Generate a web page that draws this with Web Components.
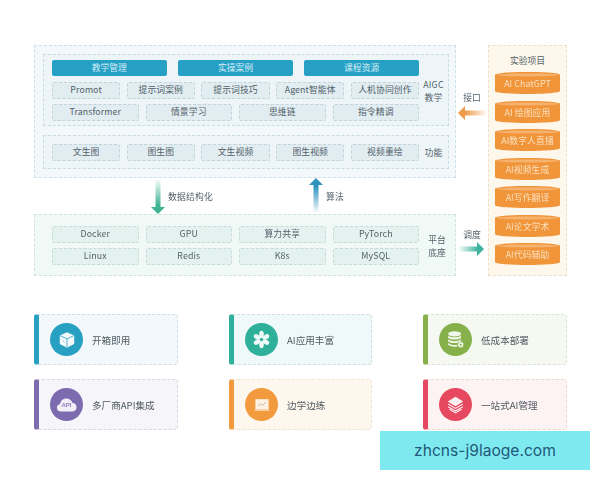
<!DOCTYPE html>
<html lang="zh">
<head>
<meta charset="utf-8">
<style>
html,body{margin:0;padding:0;background:#fff}
body{width:600px;height:480px;overflow:hidden;position:relative;font-family:"Noto Sans CJK SC","Noto Sans",sans-serif;color:#5d6b74}
</style>
</head>
<body>
<arch-page></arch-page>
<script>
const def=(name,html,extra)=>{customElements.define(name,class extends HTMLElement{
  constructor(){super();const r=this.attachShadow({mode:"open"});
    r.innerHTML=typeof html==="function"?html(this):html;}
  connectedCallback(){if(extra)extra(this)}
})};

/* dashed cell */
def("x-cell",`<style>:host{display:flex;align-items:center;justify-content:center;box-sizing:border-box;height:var(--h,17px);
  border:1px dashed var(--cb,#c3d3dc);border-radius:2px;background:var(--cg,#e2edf2);font-size:8.8px;line-height:1;color:#515f68;letter-spacing:.1px;white-space:nowrap}</style><slot></slot>`);

/* solid heading bar */
def("x-bar",`<style>:host{display:flex;align-items:center;justify-content:center;height:16px;border-radius:2px;background:#27a0c6;color:#d4edf5;font-size:8.8px;line-height:1;white-space:nowrap}</style><slot></slot>`);

/* dashed panel with a side label */
def("x-panel",`<style>
:host{display:flex;box-sizing:border-box;border:1px dashed var(--pb,#c9dbe3);background:var(--pg,#edf5f9)}
.c{flex:0 0 367px;display:flex;flex-direction:column}
.l{flex:1;display:flex;align-items:center;justify-content:center;text-align:center;font-size:8.8px;line-height:13px;color:#515f68;letter-spacing:.2px}
</style><div class="c" part="c"><slot></slot></div><div class="l"><slot name="label"></slot></div>`);

def("x-row",`<style>:host{display:grid;grid-auto-flow:column;grid-auto-columns:1fr;column-gap:var(--gap,7px);margin-bottom:var(--mb,5px)}
:host(:last-child){margin-bottom:0}</style><slot></slot>`);

/* database cylinder */
def("x-cyl",`<style>
:host{display:block;position:relative;box-sizing:border-box;height:22px;margin-bottom:6.5px}
svg{position:absolute;inset:0;width:100%;height:100%;display:block}
span{position:absolute;inset:3px 0 0 0;display:flex;align-items:center;justify-content:center;color:#fbe0bd;font-size:8.8px;line-height:1;white-space:nowrap;letter-spacing:.1px}
</style>
<svg viewBox="0 0 65 22.5" preserveAspectRatio="none">
<path d="M0 3C0 1.2 14 0 32.5 0S65 1.2 65 3V19.5C65 21.3 51 22.5 32.5 22.5S0 21.3 0 19.5Z" fill="#f1953a"/>
<ellipse cx="32.5" cy="3" rx="31" ry="1.5" fill="#f6b26f"/>
</svg><span><slot></slot></span>`);

/* gradient arrow */
def("x-arrow",t=>{
  const d=t.getAttribute("dir"),c=t.getAttribute("color");
  const id="g"+d;
  const shapes={
    down:{w:14,h:34,grad:'x1="0" y1="0" x2="0" y2="1"',p:"M4.5 0H9.5V27H14L7 34L0 27H4.5Z"},
    up:{w:14,h:34,grad:'x1="0" y1="1" x2="0" y2="0"',p:"M4.5 34H9.5V7H14L7 0L0 7H4.5Z"},
    left:{w:28,h:14,grad:'x1="1" y1="0" x2="0" y2="0"',p:"M28 4.5V9.5H7V14L0 7L7 0V4.5Z"},
    right:{w:25,h:14,grad:'x1="0" y1="0" x2="1" y2="0"',p:"M0 4.5V9.5H18V14L25 7L18 0V4.5Z"}
  }[d];
  return `<style>:host{display:block;line-height:0}</style>
  <svg width="${shapes.w}" height="${shapes.h}" viewBox="0 0 ${shapes.w} ${shapes.h}">
  <defs><linearGradient id="${id}" ${shapes.grad}><stop offset="0" stop-color="${c}" stop-opacity=".05"/><stop offset=".75" stop-color="${c}"/><stop offset="1" stop-color="${c}"/></linearGradient></defs>
  <path d="${shapes.p}" fill="url(#${id})"/></svg>`;
});

/* feature card */
def("x-card",`<style>
:host{display:flex;align-items:center;box-sizing:border-box;height:51px;border:1px dashed var(--b);border-left:5px solid var(--a);border-radius:3px;background:var(--bg);font-size:9.6px;color:#4f5a62;white-space:nowrap}
.i{flex:0 0 33px;width:33px;height:33px;border-radius:50%;background:var(--a);margin:0 9px 0 11px;display:flex;align-items:center;justify-content:center}
</style><div class="i"><slot name="icon"></slot></div><slot></slot>`);

const icons={
box:`<svg width="18" height="18" viewBox="0 0 20 20"><path d="M10 1.5 18 5V14.5L10 18.5 2 14.5V5Z" fill="#f3fafc"/><path d="M2.5 5.2 10 8.8 17.5 5.2M10 8.8V18" fill="none" stroke="#27a0c6" stroke-width=".9"/><path d="M5 11l2.5 1.2" stroke="#9ccfe0" stroke-width=".9"/></svg>`,
flower:`<svg width="19" height="19" viewBox="0 0 24 24" fill="#eefaf7"><ellipse cx="12" cy="5.6" rx="2.9" ry="4.6"/><ellipse cx="12" cy="18.4" rx="2.9" ry="4.6"/><ellipse cx="6.5" cy="8.8" rx="2.9" ry="4.6" transform="rotate(-60 6.5 8.8)"/><ellipse cx="17.5" cy="8.8" rx="2.9" ry="4.6" transform="rotate(60 17.5 8.8)"/><ellipse cx="6.5" cy="15.2" rx="2.9" ry="4.6" transform="rotate(60 6.5 15.2)"/><ellipse cx="17.5" cy="15.2" rx="2.9" ry="4.6" transform="rotate(-60 17.5 15.2)"/></svg>`,
db:`<svg width="19" height="19" viewBox="0 0 22 22"><g fill="#f1f7ea"><ellipse cx="10" cy="4.5" rx="7.5" ry="3"/><path d="M2.5 6.3C4 9 16 9 17.5 6.3V9C16 11.8 4 11.8 2.5 9Z"/><path d="M2.5 10.8C4 13.6 16 13.6 17.5 10.8V13C16 15.8 4 15.8 2.5 13Z"/><path d="M2.5 14.8C4 17.6 12 17.8 13 17V19C9 19.8 4 19 2.5 17.2Z"/></g><circle cx="17" cy="17" r="3.6" fill="#f1f7ea" stroke="#85b04a" stroke-width=".8"/><circle cx="17" cy="17" r="1.2" fill="#85b04a"/></svg>`,
api:`<svg width="21" height="16" viewBox="0 0 24 18"><path d="M6 16.5C2.8 16.5 1 14.4 1 12 1 9.8 2.6 8 4.8 7.8 5.2 4 8.2 1.5 11.8 1.5c3.4 0 6 2 6.9 5 2.8.2 4.8 2.4 4.8 5 0 2.8-2 5-5 5Z" fill="#f2eff7"/></svg><span class="t">API</span>`,
chart:`<svg width="16" height="14" viewBox="0 0 20 18"><path d="M1.5 1.5H18.5V14.5H1.5Z" fill="#fdf3e5"/><path d="M0.5 14.8H19.5V16.2H0.5Z" fill="#fdf3e5"/><path d="M5 10 8 7.5 10.5 9.5 15 5.5" fill="none" stroke="#b9a48a" stroke-width="1"/></svg>`,
layers:`<svg width="19" height="19" viewBox="0 0 22 22"><path d="M11 2 20 7.5 11 13 2 7.5Z" fill="#fdeef0"/><g fill="none" stroke="#fdeef0" stroke-width="1.3"><path d="M2.5 10.5 11 15.5 19.5 10.5"/><path d="M2.5 13.5 11 18.5 19.5 13.5"/><path d="M4 16.5 11 20.7 18 16.5"/></g></svg>`
};
def("x-icon",t=>`<style>:host{display:flex;position:relative;align-items:center;justify-content:center}
.t{position:absolute;left:0;right:0;top:50%;margin-top:-2.5px;text-align:center;font:700 6px/1 "Liberation Sans",sans-serif;color:#8d7dbb}</style>${icons[t.getAttribute("name")]}`);

def("x-watermark",`<style>:host{position:absolute;left:380px;top:431px;width:210px;height:39px;background:#7eeaef;display:flex;align-items:center;justify-content:center;
  font:15.6px/1 Inter,"Liberation Sans",sans-serif;color:#22587a}</style><slot></slot>`);

/* page */
def("arch-page",`<style>
:host{display:block;padding:45px 23px 0 34px;font-family:"Noto Sans CJK SC","Noto Sans",sans-serif}
.soft{filter:blur(.3px)}
.top{display:flex}
.left{flex:0 0 422px;display:flex;flex-direction:column}
.outer{box-sizing:border-box;height:133px;padding:8px 6px 8px 8px;border:1px dashed #cfe0e8;background:#f3f8fb;display:flex;flex-direction:column;gap:9px}
x-panel.a{height:72px;padding:5px 0 4px 8px}
x-panel.f{height:34px;padding:8px 0 0 8px}
.f span{display:block;margin-top:-8px}
.links{height:36px;display:flex}
.link{display:flex;align-items:center;font-size:8.8px;color:#515f68;letter-spacing:.2px}
.l1{margin-left:117px}.l1 span{margin-left:3px}
.l2{margin-left:96px}.l2 span{margin-left:3px}
.l1 x-arrow{margin-top:1px}.l2 x-arrow{margin-top:-2px}
.base{box-sizing:border-box;height:62px;padding:11px 6px 0 17px;border:1px dashed #cfe3df;background:#f1f9f7;display:flex;--cb:#c5dcd8;--cg:#e4f2ef}
.base .g{flex:0 0 367px}
.base .lb{flex:1;text-align:center;align-self:center;font-size:8.8px;line-height:13px;margin-top:-10px;padding-left:6px;color:#515f68}
.mid{flex:0 0 32px;display:flex;flex-direction:column;font-size:8.8px;color:#515f68;align-items:center}
.m1{margin-top:46px;display:flex;flex-direction:column;align-items:center;gap:2px}
.m2{margin-top:108px;display:flex;flex-direction:column;align-items:center;gap:1px}
.m2 x-arrow{margin-left:-1px}
.right{flex:0 0 79px;box-sizing:border-box;height:231px;border:1px dashed #ecdfcb;background:#fdf7ec;padding:9px 6px 0 6px}
.rt{font-size:8.8px;line-height:12px;text-align:center;color:#515f68;margin-bottom:5px}
.cards{display:grid;grid-template-columns:144px 143px 144px;column-gap:51px;row-gap:14px;margin-top:38px}
</style>
<div class="top soft">
  <div class="left">
    <div class="outer">
      <x-panel class="a">
        <x-row style="--gap:11.5px;--mb:6px"><x-bar>教学管理</x-bar><x-bar>实操案例</x-bar><x-bar>课程资源</x-bar></x-row>
        <x-row style="--gap:6.5px;--mb:5px;--h:17px"><x-cell>Promot</x-cell><x-cell>提示词案例</x-cell><x-cell>提示词技巧</x-cell><x-cell>Agent智能体</x-cell><x-cell>人机协同创作</x-cell></x-row>
        <x-row style="--gap:7px"><x-cell>Transformer</x-cell><x-cell>情景学习</x-cell><x-cell>思维链</x-cell><x-cell>指令精调</x-cell></x-row>
        <span slot="label">AIGC<br>教学</span>
      </x-panel>
      <x-panel class="f">
        <x-row style="--gap:6.5px"><x-cell>文生图</x-cell><x-cell>图生图</x-cell><x-cell>文生视频</x-cell><x-cell>图生视频</x-cell><x-cell>视频重绘</x-cell></x-row>
        <span slot="label">功能</span>
      </x-panel>
    </div>
    <div class="links">
      <div class="link l1"><x-arrow dir="down" color="#3fb394"></x-arrow><span>数据结构化</span></div>
      <div class="link l2"><x-arrow dir="up" color="#2f93bf"></x-arrow><span>算法</span></div>
    </div>
    <div class="base">
      <div class="g">
        <x-row style="--gap:7px;--mb:5px"><x-cell>Docker</x-cell><x-cell>GPU</x-cell><x-cell>算力共享</x-cell><x-cell>PyTorch</x-cell></x-row>
        <x-row style="--gap:7px"><x-cell>Linux</x-cell><x-cell>Redis</x-cell><x-cell>K8s</x-cell><x-cell>MySQL</x-cell></x-row>
      </div>
      <div class="lb">平台<br>底座</div>
    </div>
  </div>
  <div class="mid">
    <div class="m1"><span>接口</span><x-arrow dir="left" color="#ee9a48"></x-arrow></div>
    <div class="m2"><span>调度</span><x-arrow dir="right" color="#3fb3a0"></x-arrow></div>
  </div>
  <div class="right">
    <div class="rt">实验项目</div>
    <x-cyl>AI ChatGPT</x-cyl><x-cyl>AI 绘图应用</x-cyl><x-cyl>AI数字人直播</x-cyl><x-cyl>AI视频生成</x-cyl><x-cyl>AI写作翻译</x-cyl><x-cyl>AI论文学术</x-cyl><x-cyl>AI代码辅助</x-cyl>
  </div>
</div>
<div class="cards soft">
  <x-card style="--a:#27a0c2;--b:#cfdde4;--bg:#f2f8fb"><x-icon slot="icon" name="box"></x-icon>开箱即用</x-card>
  <x-card style="--a:#2fb09b;--b:#cfe0de;--bg:#f0f9f9"><x-icon slot="icon" name="flower"></x-icon>AI应用丰富</x-card>
  <x-card style="--a:#85b04a;--b:#dbe3d4;--bg:#f5f9f2"><x-icon slot="icon" name="db"></x-icon>低成本部署</x-card>
  <x-card style="--a:#7d6bb0;--b:#d8d8e2;--bg:#f5f5fa"><x-icon slot="icon" name="api"></x-icon>多厂商API集成</x-card>
  <x-card style="--a:#f29a3e;--b:#f0e6d8;--bg:#fdf7ee"><x-icon slot="icon" name="chart"></x-icon>边学边练</x-card>
  <x-card style="--a:#e6485f;--b:#e8d8da;--bg:#fdf3f3"><x-icon slot="icon" name="layers"></x-icon>一站式AI管理</x-card>
</div>
<x-watermark>zhcns-j9laoge.com</x-watermark>`);
</script>
</body>
</html>
